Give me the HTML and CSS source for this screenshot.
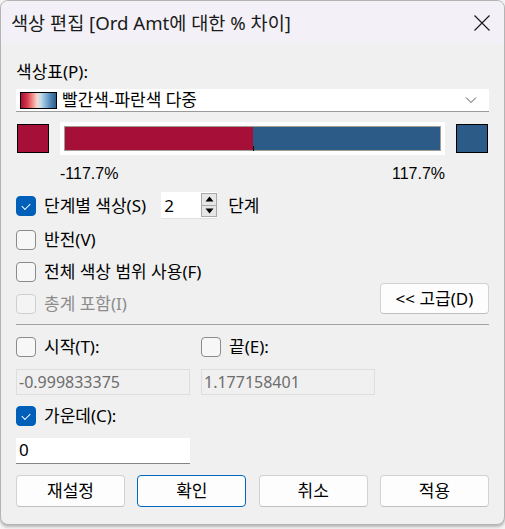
FILE: index.html
```html
<!DOCTYPE html>
<html lang="ko">
<head>
<meta charset="utf-8">
<link rel="stylesheet" href="styles.css">
</head>
<body>
<div class="window">
  <div class="titlebar">
    <span class="title">색상 편집 [Ord Amt에 대한 % 차이]</span>
    <svg class="close" width="18" height="18" viewBox="0 0 18 18"><path d="M1.5 1.5L16.5 16.5M16.5 1.5L1.5 16.5" stroke="#1a1a1a" stroke-width="1.2" fill="none"/></svg>
  </div>
  <div class="content">
    <div class="label">색상표(P):</div>
    <div class="dropdown">
      <span class="grad"></span>
      <span class="ddtext">빨간색-파란색 다중</span>
      <svg class="chev" width="12" height="8" viewBox="0 0 12 8"><path d="M1 1.5L6 6.5L11 1.5" stroke="#555" stroke-width="1" fill="none"/></svg>
    </div>
    <div class="colorrow">
      <div class="swatch red"></div>
      <div class="barframe">
        <div class="bar">
          <div class="neg"></div>
          <div class="pos"></div>
          <span class="tick"></span>
        </div>
      </div>
      <div class="swatch blue"></div>
    </div>
    <div class="range"><span>-117.7%</span><span>117.7%</span></div>

    <div class="row row1">
      <span class="cb checked"></span>
      <span class="cbtext">단계별 색상(S)</span>
      <div class="spin">
        <span class="spinval">2</span>
        <div class="spinbtns">
          <span class="sb"><svg width="9" height="6" viewBox="0 0 9 6"><path d="M0.5 5.5L4.5 0.5L8.5 5.5Z" fill="#000"/></svg></span>
          <span class="sb"><svg width="9" height="6" viewBox="0 0 9 6"><path d="M0.5 0.5L4.5 5.5L8.5 0.5Z" fill="#000"/></svg></span>
        </div>
      </div>
      <span class="unit">단계</span>
    </div>
    <div class="row row2">
      <span class="cb"></span>
      <span class="cbtext">반전(V)</span>
    </div>
    <div class="row row3">
      <span class="cb"></span>
      <span class="cbtext">전체 색상 범위 사용(F)</span>
    </div>
    <div class="row4">
      <div class="row">
        <span class="cb disabled"></span>
        <span class="cbtext dis">총계 포함(I)</span>
      </div>
      <button class="btn adv">&lt;&lt; 고급(D)</button>
    </div>
    <div class="sep"></div>
    <div class="grid2 gridcb">
      <div class="row">
        <span class="cb"></span>
        <span class="cbtext">시작(T):</span>
      </div>
      <div class="row">
        <span class="cb"></span>
        <span class="cbtext">끝(E):</span>
      </div>
    </div>
    <div class="grid2 gridin">
      <div class="field disabled">-0.999833375</div>
      <div class="field disabled">1.177158401</div>
    </div>
    <div class="row rowc">
      <span class="cb checked"></span>
      <span class="cbtext">가운데(C):</span>
    </div>
    <div class="field active">0</div>
    <div class="buttons">
      <button class="btn">재설정</button>
      <button class="btn primary">확인</button>
      <button class="btn">취소</button>
      <button class="btn">적용</button>
    </div>
  </div>
</div>
</body>
</html>
```

FILE: styles.css
```css
* { box-sizing: border-box; }
html, body {
  margin: 0;
  padding: 0;
}
body {
  width: 505px;
  height: 529px;
  background: #f4f4f4;
  font-family: "Noto Sans", "Noto Sans CJK KR", sans-serif;
  font-size: 17px;
  color: #000;
  overflow: hidden;
}
.window {
  width: 505px;
  height: 525px;
  border: 1px solid #b4b4b4;
  border-radius: 8px;
  background: #f0f0f0;
  overflow: hidden;
  box-shadow: 0 2px 3px rgba(0, 0, 0, 0.25);
}
.titlebar {
  height: 42px;
  background: #f3f1f7;
  display: flex;
  align-items: center;
  justify-content: space-between;
  padding: 0 13px 0 10px;
}
.title {
  font-size: 18.6px;
  line-height: 22px;
  color: #1a1a1a;
  margin-top: 1px;
}
.close { margin-top: 1px; }
.content {
  padding: 0 15px;
}
.label {
  margin-top: 19px;
  height: 20px;
  line-height: 20px;
}
.dropdown {
  margin-top: 7px;
  height: 23px;
  background: #fff;
  border-bottom: 1px solid #9a9a9a;
  display: flex;
  align-items: center;
  padding: 0 12px 0 4px;
}
.grad {
  width: 37px;
  height: 17px;
  border: 1px solid #000;
  background: linear-gradient(to right, #a50f38 0%, #d73a48 18%, #f0888a 32%, #f7d6cc 46%, #c6dcec 56%, #88b4d6 70%, #4f83b4 85%, #2d5b87 100%);
}
.ddtext {
  margin-left: 5px;
  line-height: 20px;
  flex: 1;
  font-size: 17px;
}
.colorrow {
  margin-top: 10px;
  height: 33px;
  display: flex;
  align-items: center;
  justify-content: space-between;
  padding: 0 1px;
}
.swatch {
  width: 32px;
  height: 29px;
  border: 1px solid #000;
}
.swatch.red { background: #a50f38; }
.swatch.blue { background: #2d5b87; }
.barframe {
  width: 385px;
  height: 33px;
  background: #fff;
  padding: 4px;
}
.bar {
  position: relative;
  height: 25px;
  border: 1px solid #a39e93;
  display: flex;
}
.neg { flex: 1; background: #a50f38; }
.pos { flex: 1; background: #2d5b87; }
.tick {
  position: absolute;
  left: 50%;
  bottom: -1px;
  width: 1px;
  height: 5px;
  background: #000;
}
.range {
  margin-top: 9px;
  height: 20px;
  padding: 0 44px;
  display: flex;
  justify-content: space-between;
  font-family: "Liberation Sans", Arial, sans-serif;
  font-size: 16px;
  line-height: 20px;
}
.row {
  display: flex;
  align-items: center;
  height: 20px;
}
.cb {
  width: 20px;
  height: 20px;
  border: 1px solid #8b8b8b;
  border-radius: 4px;
  background: #f7f7f7;
  flex: none;
  position: relative;
}
.cb.checked {
  background: #005fb8;
  border-color: #005fb8;
}
.cb.checked::after {
  content: "";
  position: absolute;
  top: 6px;
  left: 5px;
  width: 7px;
  height: 4px;
  border-left: 1.2px solid #fff;
  border-bottom: 1.2px solid #fff;
  transform: rotate(-45deg);
  transform-origin: center;
}
.cb.disabled {
  border-color: #cfcfcf;
  background: #f4f4f4;
}
.cbtext {
  margin-left: 8px;
  line-height: 20px;
  white-space: nowrap;
}
.cbtext.dis { color: #8c8c8c; }
.row1 {
  margin-top: 8px;
  height: 27px;
}
.spin {
  margin-left: 15px;
  width: 56px;
  height: 27px;
  background: #fff;
  display: flex;
  border-bottom: 1px solid #e0e0e0;
}
.spinval {
  flex: 1;
  padding-left: 3px;
  line-height: 27px;
  font-size: 17px;
}
.spinbtns {
  width: 16px;
  display: flex;
  flex-direction: column;
  padding: 1px 0 1px;
}
.sb {
  flex: 1;
  background: #e6e6e6;
  border: 1px solid #a9a9a9;
  display: flex;
  align-items: center;
  justify-content: center;
}
.sb + .sb { border-top: none; }
.unit {
  margin-left: 11px;
  line-height: 20px;
}
.row2 { margin-top: 11px; }
.row3 { margin-top: 12px; }
.row4 {
  margin-top: 1px;
  height: 31px;
  display: flex;
  justify-content: space-between;
  align-items: flex-end;
}
.btn {
  font-family: "Noto Sans", "Noto Sans CJK KR", sans-serif;
  font-size: 17px;
  color: #000;
  background: #fdfdfd;
  border: 1px solid #d2d2d2;
  border-bottom-color: #c0c0c0;
  border-radius: 4px;
  padding: 0;
  margin: 0;
  line-height: 20px;
}
.btn.adv {
  width: 109px;
  height: 31px;
  margin-right: 0;
}
.sep {
  margin-top: 10px;
  height: 1px;
  background: #a0a0a0;
}
.grid2 {
  display: grid;
  grid-template-columns: 174px 174px;
  column-gap: 11px;
}
.gridcb { margin-top: 12px; }
.gridin { margin-top: 12px; }
.field {
  height: 26px;
  line-height: 24px;
  padding-left: 2px;
}
.field.disabled {
  border: 1px solid #dedede;
  color: #6d6d6d;
  background: #f0f0f0;
  font-family: "Noto Sans", sans-serif;
  font-size: 16px;
}
.rowc { margin-top: 11px; }
.field.active {
  margin-top: 12px;
  width: 174px;
  background: #fff;
  border-bottom: 1px solid #848484;
  padding-left: 3px;
  font-family: "Noto Sans", sans-serif;
  font-size: 17px;
}
.buttons {
  margin-top: 11px;
  display: grid;
  grid-template-columns: repeat(4, 109px);
  justify-content: space-between;
}
.buttons .btn { height: 32px; }
.btn.primary {
  border: 1px solid #0067c0;
}
```
